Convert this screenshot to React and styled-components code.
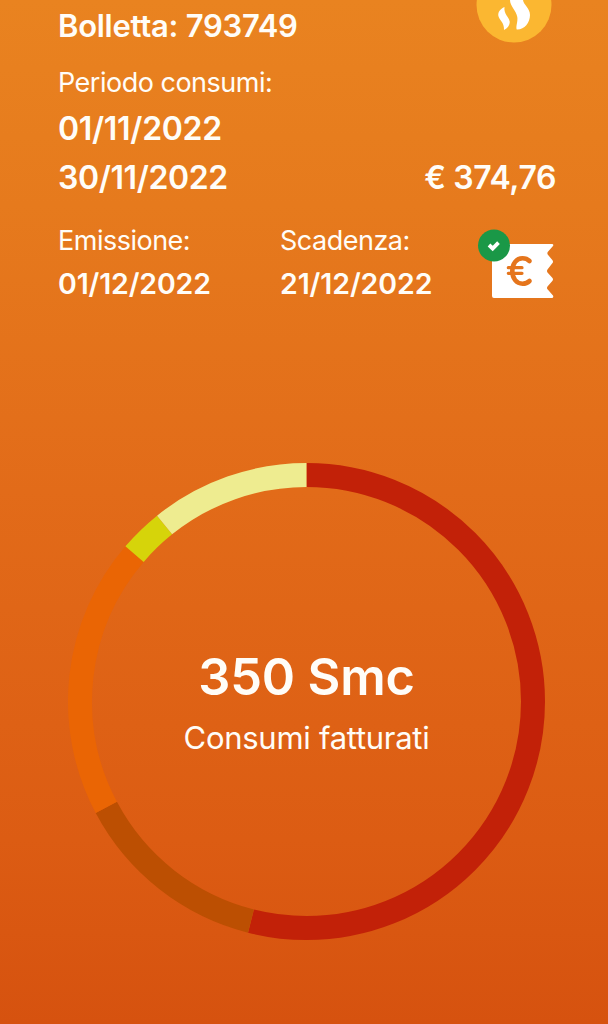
import React from "react";
import styled, { createGlobalStyle } from "styled-components";

const GlobalStyle = createGlobalStyle`
  * {
    box-sizing: border-box;
  }

  body {
    margin: 0;
    background: #d6520f;
  }
`;

const Page = styled.main`
  height: 1024px;
  overflow: hidden;
  color: #fffdf8;
  font-family: Inter, "Liberation Sans", sans-serif;
  background: linear-gradient(
    180deg,
    #e98320 0%,
    #e67a1d 20%,
    #e26b19 48%,
    #dc5c13 82%,
    #d6520f 100%
  );
`;

const Header = styled.header`
  height: 463px;
  padding: 0 52px 0 58px;
`;

const Row = styled.div`
  display: flex;
  justify-content: space-between;
  align-items: flex-start;
  margin-top: ${({ $top }) => $top || 0}px;
`;

const Text = styled.div`
  font-size: ${({ $size }) => $size}px;
  line-height: ${({ $line }) => $line}px;
  font-weight: ${({ $light }) => ($light ? 400 : 600)};
  letter-spacing: ${({ $spacing }) => $spacing || 0}px;
  margin-top: ${({ $top }) => $top || 0}px;
  white-space: nowrap;
`;

const DateColumn = styled.div`
  flex: none;
  width: 222px;

  & + & {
    width: 160px;
  }
`;

const ReceiptColumn = styled.div`
  flex: 1;
  display: flex;
  justify-content: flex-end;
  padding: 3px 1px 0 0;
`;

const Icon = styled.svg`
  display: block;
  flex: none;
`;

const GasBadge = styled.div`
  margin-right: 4px;
`;

const Chart = styled.section`
  display: grid;
  width: 477px;
  height: 477px;
  margin-left: 68px;

  > * {
    grid-area: 1 / 1;
  }
`;

const ChartLabel = styled.div`
  display: flex;
  flex-direction: column;
  align-items: center;
  padding-top: 184px;
`;

const slices = [
  { color: "#c22108", from: 0, to: 194.2 },
  { color: "#bc4f02", from: 194.2, to: 242.1 },
  { color: "#ea6504", from: 242.1, to: 310.6 },
  { color: "#d6d40a", from: 310.6, to: 321.2 },
  { color: "#eeec90", from: 321.2, to: 360 },
];

const GasIcon = () => (
  <Icon width="76" height="44" viewBox="0 0 76 44">
    <circle cx="38" cy="5" r="37.5" fill="#fbb731" />
    <path
      d="M34 0C34 6 40 10 41.300 17C42 22 39.700 26 40.700 29.500C48 30 54 23 54 15C54 8 47.500 5 47 0Z"
      fill="#fff"
    />
    <path
      d="M28.500 7C24 9 22 12 22.300 15.500C22.800 20 28.500 22 28 30C31.500 28.500 34 25 33.700 21.500C33 17 27.500 14 28.500 7Z"
      fill="#fff"
    />
  </Icon>
);

const ReceiptIcon = () => (
  <Icon width="78" height="72" viewBox="0 0 78 72">
    <path
      d="M17 16H75Q77 16 76 18L70.700 24Q70 25.300 70.700 26.500L75.500 32.200Q76.500 33.700 75.500 35L70.500 41.500Q69.500 43 70.500 44.500L75.500 50Q76.500 51.300 75.500 52.700L70.500 58.500Q69.500 60 70.500 61.300L76 67.500Q77 70 74.700 70H17Q15 70 15 68V18Q15 16 17 16Z"
      fill="#fff"
    />
    <path
      d="M52.500 33C50.500 31 48.500 30.300 45.500 30.300C39.500 30.300 35.300 35.500 35.300 43C35.300 50.500 39.500 55.700 45.500 55.700C48.500 55.700 50.500 55 52.500 53"
      fill="none"
      stroke="#e5751c"
      strokeWidth="4.6"
      strokeLinecap="round"
    />
    <path
      d="M31.300 39.700H45M31.300 45.300H45"
      stroke="#e5751c"
      strokeWidth="3.2"
      strokeLinecap="round"
    />
    <circle cx="17" cy="17.5" r="16" fill="#1a9847" />
    <path
      d="M12 17L15.700 20.500L21.500 14.700"
      fill="none"
      stroke="#fff"
      strokeWidth="3.8"
    />
  </Icon>
);

const Ring = () => (
  <Icon width="477" height="477" viewBox="0 0 477 477">
    {slices.map(({ color, from, to }) => (
      <circle
        key={color}
        cx="238.5"
        cy="238.5"
        r="226.5"
        fill="none"
        stroke={color}
        strokeWidth="24"
        pathLength="360"
        strokeDasharray={`${to - from} 360`}
        transform={`rotate(${from - 90} 238.5 238.5)`}
      />
    ))}
  </Icon>
);

const App = () => {
  return (
    <>
      <GlobalStyle />
      <Page>
        <Header>
          <Row>
            <Text $size={31} $line={38} $top={7} $spacing={-0.28}>
              Bolletta: 793749
            </Text>
            <GasBadge>
              <GasIcon />
            </GasBadge>
          </Row>
          <Text $size={27} $line={32} $top={22} $spacing={-0.5} $light>
            Periodo consumi:
          </Text>
          <Text $size={32} $line={40} $top={10} $spacing={-0.3}>
            01/11/2022
          </Text>
          <Row $top={9}>
            <Text $size={32} $line={40} $spacing={-0.4}>
              30/11/2022
            </Text>
            <Text $size={32} $line={40} $spacing={-0.4}>
              € 374,76
            </Text>
          </Row>
          <Row $top={27}>
            <DateColumn>
              <Text $size={27} $line={32} $spacing={-0.5} $light>
                Emissione:
              </Text>
              <Text $size={28.5} $line={34} $top={10} $spacing={-0.15}>
                01/12/2022
              </Text>
            </DateColumn>
            <DateColumn>
              <Text $size={27} $line={32} $spacing={-0.5} $light>
                Scadenza:
              </Text>
              <Text $size={28.5} $line={34} $top={10} $spacing={-0.1}>
                21/12/2022
              </Text>
            </DateColumn>
            <ReceiptColumn>
              <ReceiptIcon />
            </ReceiptColumn>
          </Row>
        </Header>
        <Chart>
          <Ring />
          <ChartLabel>
            <Text $size={50.5} $line={60} $spacing={-0.2}>
              350 Smc
            </Text>
            <Text $size={31} $line={40} $top={11} $spacing={-0.28} $light>
              Consumi fatturati
            </Text>
          </ChartLabel>
        </Chart>
      </Page>
    </>
  );
};

export default App;
